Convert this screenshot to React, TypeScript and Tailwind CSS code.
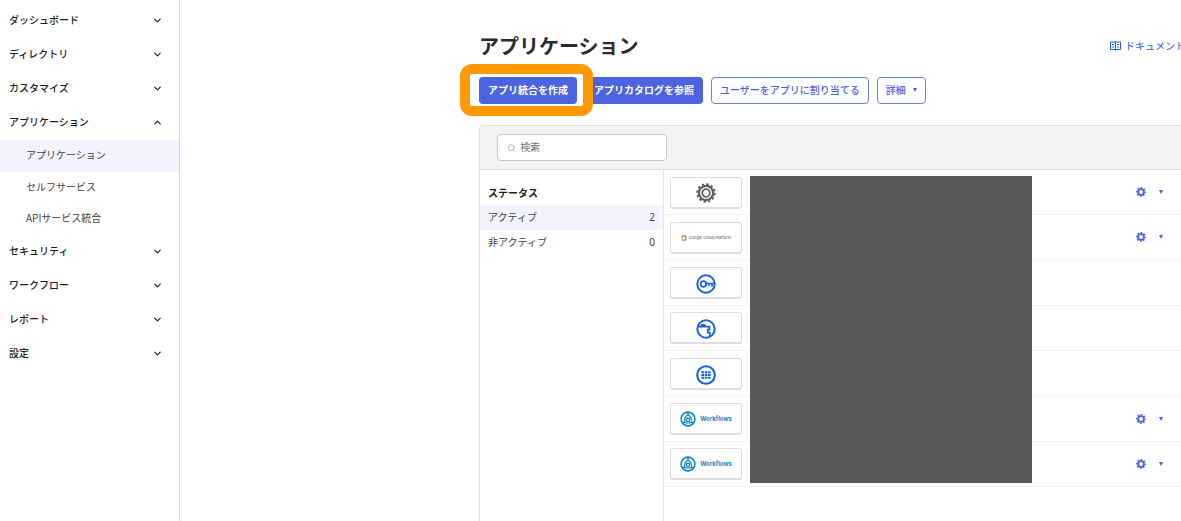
import { ReactNode } from 'react';
import { ChevronDown, ChevronUp, Search } from 'lucide-react';

type NavSection = {
  label: string;
  items?: string[];
};

const sections: NavSection[] = [
  { label: 'ダッシュボード' },
  { label: 'ディレクトリ' },
  { label: 'カスタマイズ' },
  { label: 'アプリケーション', items: ['アプリケーション', 'セルフサービス', 'APIサービス統合'] },
  { label: 'セキュリティ' },
  { label: 'ワークフロー' },
  { label: 'レポート' },
  { label: '設定' },
];

const statuses = [
  { label: 'アクティブ', count: 2, active: true },
  { label: '非アクティブ', count: 0, active: false },
];

function GearLogo() {
  return (
    <svg viewBox="0 0 20 20" className="mt-[2px] size-5" fill="none" stroke="#5e5e5e">
      <circle cx="10" cy="10" r="8.8" strokeWidth="1.8" strokeDasharray="2.5 2.107" />
      <circle cx="10" cy="10" r="7.1" strokeWidth="2.2" />
      <circle cx="10" cy="10" r="3.8" strokeWidth="1.8" />
    </svg>
  );
}

function GoogleCloudLogo() {
  return (
    <span className="flex items-center gap-[2px] pt-[2px]">
      <svg viewBox="0 0 12 12" className="size-[6px]" fill="none" strokeWidth="2.4">
        <path d="M2.2 4.4 3.9 1.6h4.2L9.4 3.8" stroke="#ea4335" />
        <path d="M8.6 2.4 10.7 6 8.1 10.4H6.4" stroke="#4285f4" />
        <path d="M6.6 10.4H3.9L2.9 8.7" stroke="#34a853" />
        <path d="M3.3 9.4 1.4 6l1.2-2.2" stroke="#fbbc05" />
      </svg>
      <span className="font-[Inter] text-[4px] leading-none text-[#555]">Google Cloud Platform</span>
    </span>
  );
}

function KeyLogo() {
  return (
    <svg viewBox="0 0 20 20" className="mt-[3px] size-5" fill="none" stroke="#1662dd" strokeWidth="2">
      <circle cx="10" cy="10" r="8.7" />
      <circle cx="7.4" cy="10" r="2.8" strokeWidth="1.8" />
      <path d="M10.2 9.5H18M16 9.5v3.3M13 9.5v2.6" strokeWidth="1.6" />
    </svg>
  );
}

function BrowserLogo() {
  return (
    <svg viewBox="0 0 20 20" className="mt-[3px] size-5" fill="none" stroke="#1662dd" strokeWidth="2">
      <circle cx="10" cy="10" r="8.7" />
      <path d="M2 7.6h11.4v3h-1.6v3h2v3.6" strokeWidth="1.8" />
      <path d="M5.2 5h4.2v2.2H4.2z" fill="#1662dd" stroke="none" />
    </svg>
  );
}

function GridLogo() {
  return (
    <svg viewBox="0 0 20 20" className="mt-[3px] size-5" fill="none" stroke="#1662dd">
      <circle cx="10" cy="10" r="8.8" strokeWidth="2.1" />
      <path d="M5.4 7.2h9.4M5.4 10h9.4M5.4 12.8h9.4" strokeWidth="2.1" strokeDasharray="2.6 .7" />
    </svg>
  );
}

function WorkflowsLogo() {
  return (
    <span className="flex items-center gap-1">
      <svg viewBox="0 0 16 16" className="size-4" fill="none" stroke="#1586c4" strokeWidth="1.6">
        <circle cx="8" cy="8" r="6.9" />
        <circle cx="8" cy="8.8" r="1.8" strokeWidth="1.3" />
        <path d="M8 1v3M4.4 11.2 2.4 12.4M11.6 11.2l2 1.2" />
        <path d="M8 4C5.6 5 4.4 7.4 4.4 11.2c2.2 1 5 1 7.2 0C11.6 7.4 10.4 5 8 4z" strokeWidth="1.2" />
      </svg>
      <span className="font-[Inter] text-[6px] leading-none font-bold text-[#1586c4]">Workflows</span>
    </span>
  );
}

const apps: { id: number; name: string; logo: ReactNode; hasMenu: boolean }[] = [
  { id: 1, name: 'SAML', logo: <GearLogo />, hasMenu: true },
  { id: 2, name: 'Google Cloud Platform', logo: <GoogleCloudLogo />, hasMenu: true },
  { id: 3, name: 'Admin', logo: <KeyLogo />, hasMenu: false },
  { id: 4, name: 'Browser Plugin', logo: <BrowserLogo />, hasMenu: false },
  { id: 5, name: 'Dashboard', logo: <GridLogo />, hasMenu: false },
  { id: 6, name: 'Workflows', logo: <WorkflowsLogo />, hasMenu: true },
  { id: 7, name: 'Workflows OAuth', logo: <WorkflowsLogo />, hasMenu: true },
];

function Caret() {
  return (
    <svg viewBox="0 0 4 4" className="size-1" fill="#4c64e1">
      <path d="M0 0h4L2 4z" />
    </svg>
  );
}

function SettingsIcon() {
  return (
    <svg viewBox="0 0 10 10" className="size-[10px]" fill="none" stroke="#4c64e1">
      <circle cx="5" cy="5" r="2.9" strokeWidth="1.9" />
      <circle cx="5" cy="5" r="4.2" strokeWidth="1.4" strokeDasharray="1.8 1.499" strokeDashoffset=".9" />
    </svg>
  );
}

function BookIcon() {
  return (
    <svg viewBox="0 0 11 10" className="h-[10px] w-[11px]" fill="none" stroke="currentColor">
      <path d="M.5 1h10v7.5H.5zM5.5 1v8.5M2 3.5h2M2 6h2M7 3.5h2M7 6h2" />
    </svg>
  );
}

function Sidebar() {
  return (
    <nav className="w-[180px] shrink-0 border-r border-[#d9d9dc] pt-[3px]">
      <ul>
        {sections.map((section) => (
          <li key={section.label}>
            <button
              type="button"
              aria-expanded={!!section.items}
              className="flex h-[34px] w-full items-center justify-between pr-4 pl-[9px] font-medium"
            >
              {section.label}
              {section.items ? (
                <ChevronUp className="size-[11px]" strokeWidth={2.5} />
              ) : (
                <ChevronDown className="size-[11px]" strokeWidth={2.5} />
              )}
            </button>
            {section.items && (
              <ul className="pt-px text-[#3f3f45]">
                {section.items.map((item, index) => (
                  <li key={item}>
                    <a
                      href="#"
                      className={
                        index === 0
                          ? 'flex h-8 items-center bg-[#f2f3ff] pb-[2px] pl-[26px]'
                          : 'flex h-[31px] items-center pb-[2px] pl-[26px]'
                      }
                    >
                      {item}
                    </a>
                  </li>
                ))}
              </ul>
            )}
          </li>
        ))}
      </ul>
    </nav>
  );
}

function Actions() {
  return (
    <div className="flex h-[27px] gap-2">
      <div className="relative">
        {/* callout around the create button */}
        <div className="pointer-events-none absolute -top-[13px] -right-4 -bottom-3 -left-[19px] rounded-xl border-10 border-[#ff9900] bg-white" />
        <button type="button" className="relative h-full rounded bg-[#4c64e1] px-[9px] pb-[2px] font-bold text-white">
          アプリ統合を作成
        </button>
      </div>
      <button type="button" className="rounded bg-[#4c64e1] px-[9px] pb-[2px] font-bold text-white">
        アプリカタログを参照
      </button>
      <button type="button" className="rounded border border-[#6d80e6] px-2 pb-[2px] font-medium text-[#4c64e1]">
        ユーザーをアプリに割り当てる
      </button>
      <button
        type="button"
        className="flex items-center gap-[7px] rounded border border-[#6d80e6] px-2 pb-[2px] font-medium text-[#4c64e1]"
      >
        詳細
        <Caret />
      </button>
    </div>
  );
}

function StatusFilter() {
  return (
    <aside className="w-[184px] shrink-0 border-r border-[#e6e6e8] pt-3 text-[#3f3f45]">
      <h2 className="flex h-[23px] items-center pb-[2px] pl-2 font-bold text-[#1d1d21]">ステータス</h2>
      <ul>
        {statuses.map((status) => (
          <li key={status.label}>
            <a
              href="#"
              className={
                status.active
                  ? 'flex h-[25px] items-center justify-between bg-[#f2f3fd] px-2 pb-[2px]'
                  : 'flex h-[25px] items-center justify-between px-2 pb-[2px]'
              }
            >
              <span>{status.label}</span>
              <span className="font-['Noto_Sans']">{status.count}</span>
            </a>
          </li>
        ))}
      </ul>
    </aside>
  );
}

function AppList() {
  return (
    <div className="relative flex-1">
      <ul className="grid h-[317px] grid-rows-7">
        {apps.map((app) => (
          <li
            key={app.id}
            className="flex items-center justify-between border-b border-[#f3f3f5] pt-px pr-[18px] pl-[6px]"
          >
            <a
              href="#"
              aria-label={app.name}
              className="flex h-8 w-[72px] items-center justify-center rounded-[3px] border border-b-2 border-[#dddde2]"
            >
              {app.logo}
            </a>
            {app.hasMenu && (
              <button type="button" aria-label="設定メニュー" className="flex items-center gap-[13px] pb-px">
                <SettingsIcon />
                <Caret />
              </button>
            )}
          </li>
        ))}
      </ul>
      {/* masked app names */}
      <div className="absolute top-[6px] right-[149px] left-[86px] h-[307px] bg-[#595959]" />
    </div>
  );
}

export default function App() {
  return (
    <div className="flex min-h-screen overflow-hidden bg-white font-['Noto_Sans_CJK_JP',sans-serif] text-[10px] leading-4 text-[#1d1d21]">
      <Sidebar />
      <main className="flex min-w-0 flex-1 flex-col pl-[299px]">
        <header className="flex h-[77px] items-center justify-between pt-[15px]">
          <h1 className="text-[20px] leading-6 font-bold text-[#2b2b2f]">アプリケーション</h1>
          <a href="#" className="-mr-1 flex items-center gap-1 whitespace-nowrap text-[#1662dd]">
            <BookIcon />
            ドキュメント
          </a>
        </header>
        <Actions />
        <section className="mt-[21px] flex flex-1 flex-col rounded-tl border-t border-l border-[#e1e1e4]">
          <div className="flex h-11 items-center border-b border-[#dcdcde] bg-[#f3f3f3] pl-[17px]">
            <label className="flex h-[27px] w-[170px] items-center gap-1 rounded border border-[#c9c9cc] bg-white px-[9px]">
              <Search className="size-[10px] text-[#a7a7ab]" />
              <input
                type="text"
                aria-label="検索"
                placeholder="検索"
                className="w-full pb-px outline-none placeholder:text-[#6e6e78]"
              />
            </label>
          </div>
          <div className="flex flex-1">
            <StatusFilter />
            <AppList />
          </div>
        </section>
      </main>
    </div>
  );
}
